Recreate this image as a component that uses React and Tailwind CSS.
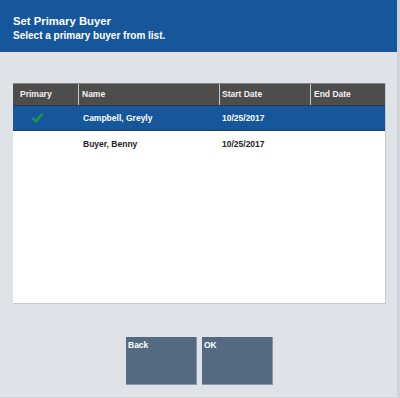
import React from 'react'

const rows = [
  { primary: true, name: 'Campbell, Greyly', start: '10/25/2017', end: '' },
  { primary: false, name: 'Buyer, Benny', start: '10/25/2017', end: '' },
]

function Check() {
  return (
    <svg width="11" height="10" viewBox="0 0 11 10">
      <path d="M1.3 5.6 L4 8.4 L9.8 1.3" fill="none" stroke="#1f9a3a" strokeWidth="2.4" strokeLinecap="round" strokeLinejoin="round" />
    </svg>
  )
}

export default function App() {
  return (
    <div className="w-[400px] h-[398px] bg-[#dfe2e6] flex flex-col border-r-[3px] border-b border-[#cfd3d8] overflow-hidden" style={{ fontFamily: '"Liberation Sans", Arial, sans-serif' }}>
      <div className="h-[52px] bg-[#16569b] pl-[13px] pt-[15px] text-white font-bold shrink-0">
        <div className="text-[11.3px] leading-[13px]">Set Primary Buyer</div>
        <div className="text-[10px] leading-[12px] mt-[2px]">Select a primary buyer from list.</div>
      </div>

      <div className="mt-[31px] ml-[13px] w-[373px] h-[221px] bg-white border-b border-r border-[#c4c7cc] flex flex-col shrink-0">
        <div className="grid grid-cols-[65px_141px_91px_1fr] h-[22px] bg-[#4d4d4d] text-[#f2f2f2] text-[8.5px] font-bold border-t border-[#888]">
          <div className="pl-[7px] flex items-center">Primary</div>
          <div className="pl-[3px] flex items-center border-l border-[#c8c8c8]">Name</div>
          <div className="pl-[2px] flex items-center border-l border-[#c8c8c8]">Start Date</div>
          <div className="pl-[3px] flex items-center border-l border-[#c8c8c8]">End Date</div>
        </div>
        {rows.map((r) => (
          <div
            key={r.name}
            className={
              r.primary
                ? 'grid grid-cols-[65px_141px_91px_1fr] h-[26px] bg-[#16569b] text-white text-[8.5px] font-bold border-y border-[#2a3a4e]'
                : 'grid grid-cols-[65px_141px_91px_1fr] h-[26px] text-[#222] text-[8.5px] font-bold'
            }
          >
            <div className="flex items-center pl-[19px]">{r.primary && <Check />}</div>
            <div className="pl-[5px] flex items-center">{r.name}</div>
            <div className="pl-[3px] flex items-center">{r.start}</div>
            <div className="pl-[3px] flex items-center">{r.end}</div>
          </div>
        ))}
      </div>

      <div className="mt-[33px] flex gap-[5px] pl-[126px]">
        <button className="w-[71px] h-[48px] bg-[#546a80] text-white text-[8.5px] font-bold text-left pl-[2px] pt-[2px] flex items-start border-r border-b border-[#8797a8]">Back</button>
        <button className="w-[71px] h-[48px] bg-[#546a80] text-white text-[8.5px] font-bold text-left pl-[2px] pt-[2px] flex items-start border-r border-b border-[#8797a8]">OK</button>
      </div>
    </div>
  )
}
